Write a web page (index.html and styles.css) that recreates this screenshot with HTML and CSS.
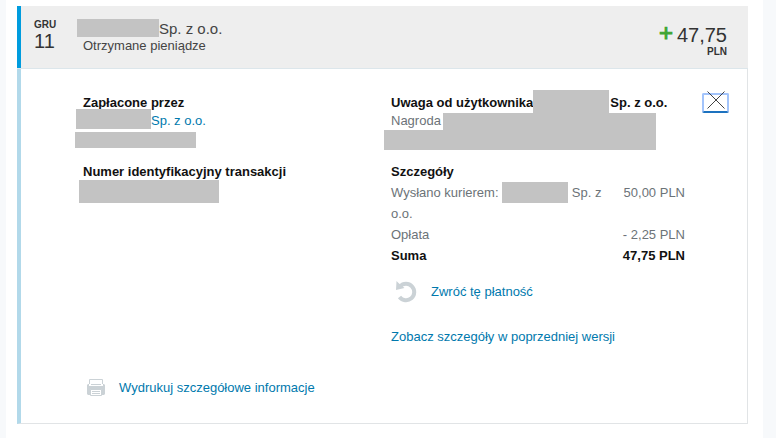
FILE: index.html
```
<!DOCTYPE html>
<html lang="pl">
<head>
    <meta charset="UTF-8">
    <meta name="viewport" content="width=device-width, initial-scale=1.0">
    <title>Otrzymane pieniądze</title>
    <link rel="stylesheet" href="styles.css">
</head>
<body>
    <main class="page">
        <article class="transaction">
            <header class="summary">
                <div class="date">
                    <span class="month">GRU</span>
                    <span class="day">11</span>
                </div>
                <div class="who">
                    <div class="name"><span class="hidden nameBox"></span>Sp. z o.o.</div>
                    <div class="type">Otrzymane pieniądze</div>
                </div>
                <div class="amount">
                    <div class="value"><span class="plus">+</span><span>47,75</span></div>
                    <div class="currency">PLN</div>
                </div>
            </header>

            <div class="details">
                <section class="left">
                    <h4>Zapłacone przez</h4>
                    <div class="payer"><span class="hidden payerBox"></span><a href="#">Sp. z o.o.</a></div>
                    <div class="hidden mailBox"></div>
                    <h4 class="idTitle">Numer identyfikacyjny transakcji</h4>
                    <div class="hidden idBox"></div>
                </section>

                <section class="right">
                    <div class="noteTitle">
                        <h4>Uwaga od użytkownika</h4>
                        <span class="hidden userBox"></span>
                        <h4>Sp. z o.o.</h4>
                    </div>
                    <div class="note"><span>Nagroda</span><span class="hidden noteBox"></span></div>
                    <div class="hidden noteBox2"></div>

                    <h4 class="detailsTitle">Szczegóły</h4>
                    <table>
                        <tr>
                            <td>Wysłano kurierem: <span class="hidden courierBox"></span> Sp. z o.o.</td>
                            <td class="price">50,00 PLN</td>
                        </tr>
                        <tr>
                            <td>Opłata</td>
                            <td class="price">- 2,25 PLN</td>
                        </tr>
                        <tr class="total">
                            <td>Suma</td>
                            <td class="price">47,75 PLN</td>
                        </tr>
                    </table>

                    <a href="#" class="refund">
                        <svg width="22" height="22" viewBox="0 0 22 22" aria-hidden="true">
                            <path d="M5 5.5A8.2 8.2 0 1 1 4.5 16" fill="none" stroke="#cbd2d6" stroke-width="4"/>
                            <path d="M1.5 0L3.5 2L9.5 7L1 9Z" fill="#cbd2d6"/>
                        </svg>
                        <span>Zwróć tę płatność</span>
                    </a>
                    <a href="#" class="oldVersion">Zobacz szczegóły w poprzedniej wersji</a>
                </section>

                <button class="close" type="button" aria-label="Zamknij">
                    <svg width="18" height="18" viewBox="0 0 18 18" aria-hidden="true">
                        <path d="M.5 .5L17.5 17.5M17.5 .5L.5 17.5" stroke="#444" stroke-width="1"/>
                    </svg>
                </button>
            </div>

            <footer>
                <a href="#" class="print">
                    <svg width="18" height="18" viewBox="0 0 18 18" aria-hidden="true">
                        <path d="M2.5 5V.5H15.5V5" fill="none" stroke="#cbd2d6"/>
                        <path d="M4 5.5H14" stroke="#cbd2d6"/>
                        <path d="M1 5H2V7H16V5H17L18 6V15L17 16H1L0 15V6Z" fill="#cbd2d6"/>
                        <path d="M3.5 10.5H14.5V16.5H3.5Z" fill="#fff" stroke="#cbd2d6"/>
                        <path d="M5 12.5H13M5 14.5H13" stroke="#cbd2d6"/>
                    </svg>
                    <span>Wydrukuj szczegółowe informacje</span>
                </a>
            </footer>
        </article>
    </main>
</body>
</html>
```
FILE: styles.css
```
@charset "utf-8";

*{
    padding: 0;
    margin: 0;
    box-sizing: border-box;
}
body{
    background-color: #f7f9fb;
    font: normal 13px/14px "Liberation Sans", Arial, sans-serif;
    color: #6c7378;
}
a{
    color: #0079ad;
    text-decoration: none;
}
a:hover{
    text-decoration: underline;
}
h4{
    font-size: 13px;
    line-height: 16px;
    color: #111;
}
.page{
    min-height: 100vh;
    margin: 0 13px 0 6px;
    padding: 6px 15px 14px 11px;
    background-color: #fff;
}
/* zasłonięte dane */
.hidden{
    display: block;
    flex: none;
    background-color: #c3c3c3;
}

/* nagłówek */
.summary{
    display: flex;
    height: 63px;
    padding: 13px 21px 0 17px;
    background-color: #eee;
    border-bottom: 1px solid #dce6eb;
    box-shadow: inset 4px 0 #009cde;
    color: #333;
}
.date{
    width: 43px;
}
.month, .day{
    display: block;
}
.month, .currency{
    font-size: 10px;
    line-height: 12px;
    font-weight: bold;
}
.day{
    font-size: 20px;
    line-height: 20px;
}
.who{
    flex: 1;
    color: #444;
}
.name{
    display: flex;
    font-size: 15px;
    line-height: 20px;
}
.nameBox{
    width: 82px;
    height: 18px;
}
.type{
    padding-left: 6px;
}
.amount{
    padding-top: 4px;
    text-align: right;
}
.value{
    display: flex;
    gap: 4px;
    font-size: 20px;
    line-height: 24px;
}
.plus{
    color: #3fa535;
    font-size: 24px;
    line-height: 20px;
    -webkit-text-stroke: 1px #3fa535;
}
.currency{
    line-height: 10px;
}

/* szczegóły */
.details, footer{
    border-left: 4px solid #b2d9ea;
    border-right: 1px solid #e1e4e6;
}
.details{
    display: flex;
    align-items: flex-start;
    padding: 21px 18px 0 54px;
}
.left{
    flex: 1;
    padding-top: 5px;
}
.left h4{
    padding-left: 8px;
}
.payer{
    display: flex;
    align-items: flex-end;
    margin: -2px 0 3px 1px;
    line-height: 16px;
}
.payerBox{
    width: 75px;
    height: 20px;
}
.mailBox{
    width: 121px;
    height: 16px;
}
.left .idTitle{
    margin: 16px 0 0;
}
.idBox{
    width: 140px;
    height: 23px;
    margin-left: 4px;
}
.right{
    width: 301px;
    margin-right: 17px;
}
.right h4, .note{
    padding-left: 7px;
}
.noteTitle{
    display: flex;
    align-items: flex-start;
}
.noteTitle h4{
    padding-top: 5px;
}
.right .userBox + h4{
    padding-left: 1px;
}
.userBox{
    width: 76px;
    height: 23px;
}
.note{
    display: flex;
    gap: 2px;
    line-height: 16px;
}
.noteBox{
    width: 213px;
    height: 17px;
}
.noteBox2{
    width: 272px;
    height: 20px;
}
.detailsTitle{
    margin: 14px 0 2px;
}
table{
    width: 294px;
    margin-left: 7px;
    border-collapse: collapse;
    line-height: 21px;
}
td{
    vertical-align: top;
}
.courierBox{
    display: inline-block;
    width: 66px;
    height: 21px;
    vertical-align: top;
}
.price{
    width: 80px;
    text-align: right;
    white-space: nowrap;
}
.total{
    color: #111;
    font-weight: bold;
}
.refund{
    display: flex;
    align-items: center;
    gap: 14px;
    margin: 15px 0 0 11px;
}
.oldVersion{
    display: block;
    margin: 27px 0 0 7px;
}
.close{
    width: 27px;
    height: 20px;
    margin-top: 3px;
    background-color: transparent;
    border: 2px solid #a3c4fb;
    border-bottom-color: #1d72bf;
    border-radius: 2px;
    cursor: pointer;
}
.close svg{
    display: block;
    margin: -6px auto 0;
}
footer{
    padding: 35px 20px 26px 66px;
    border-bottom: 1px solid #e1e4e6;
}
.print{
    display: flex;
    align-items: center;
    gap: 14px;
}
```
